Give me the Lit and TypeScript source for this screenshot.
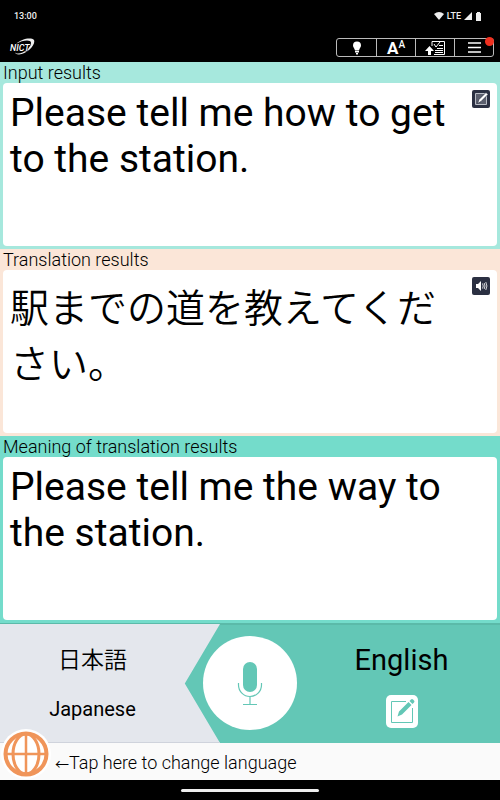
import { LitElement, html, css, svg } from "lit";
import { customElement, property } from "lit/decorators.js";

const penSquare = svg`
  <path d="M20 6.500H5.500v21H26.500V13" fill="none" stroke="currentColor" stroke-width="1"/>
  <path d="M11.500 21.500l1.500-5L22.500 7l3 3L16 19.500z M23.500 6l1.500-1.500q1-1 2 0l1 1q1 1 0 2L26.500 9z" fill="currentColor"/>`;

@customElement("result-panel")
class ResultPanel extends LitElement {
  @property() heading = "";
  @property() text = "";
  @property() action = "";
  @property() lang = "en";

  static styles = css`
    :host {
      display: flex;
      flex-direction: column;
      padding: 1px 3px 3px;
    }
    h2 {
      margin: 0;
      font-size: 18px;
      line-height: 20px;
      font-weight: 350;
    }
    .card {
      flex: 1;
      display: flex;
      align-items: flex-start;
      background: #fff;
      border-radius: 4px;
      padding: 7px 7px 6px;
    }
    p {
      flex: 1;
      margin: 0;
      font-size: 39px;
      line-height: 46px;
    }
    p.ja {
      line-height: 56px;
      padding-top: 4px;
      font-weight: 350;
    }
    button {
      flex: none;
      width: 18px;
      height: 18px;
      padding: 0;
      border: 0;
      border-radius: 2px;
      background: #2b3042;
      color: #fff;
    }
    svg {
      display: block;
      width: 18px;
      height: 18px;
    }
  `;

  render() {
    return html`
      <h2>${this.heading}</h2>
      <div class="card">
        <p class=${this.lang} lang=${this.lang}>${this.text}</p>
        ${this.action === "edit"
          ? html`<button aria-label="Edit input">
              <svg viewBox="0 0 18 18">
                <path d="M3.500 3.500h11v11h-11z" fill="#5b5f6e" stroke="#b9bcc5" />
                <path d="M5.500 13.500l1.500-4L14 2.500l2 2-7 7z" fill="#fff" stroke="#1b2032" stroke-width=".6" />
              </svg>
            </button>`
          : this.action === "speak"
            ? html`<button aria-label="Play translation">
                <svg viewBox="0 0 18 18">
                  <path d="M4 7h2l3-3v10l-3-3H4z" fill="#fff" />
                  <path d="M10.500 6.500q1.500 2.500 0 5M12.200 6q1.600 3 0 6M13.800 5q2.200 4 0 8" fill="none" stroke="#fff" stroke-width=".8" />
                </svg>
              </button>`
            : ""}
      </div>
    `;
  }
}

@customElement("app-root")
class AppRoot extends LitElement {
  static styles = css`
    :host {
      display: flex;
      flex-direction: column;
      min-height: 100vh;
      background: #000;
      color: #000;
      font-family: Roboto, "Noto Sans CJK JP", sans-serif;
    }
    button {
      font: inherit;
      color: inherit;
      border: 0;
      padding: 0;
      background: none;
    }
    svg {
      display: block;
    }
    .status {
      display: flex;
      align-items: center;
      justify-content: space-between;
      height: 32px;
      padding: 0 17px 0 14px;
      color: #eee;
      font-size: 9px;
      font-weight: 500;
    }
    .signals {
      display: flex;
      align-items: center;
      gap: 3px;
    }
    .bar {
      display: flex;
      align-items: center;
      justify-content: space-between;
      height: 30px;
      padding: 0 6px 0 9px;
    }
    .tools {
      position: relative;
      display: grid;
      grid-template-columns: repeat(4, 1fr);
      width: 158px;
      height: 19px;
      box-sizing: border-box;
      border: 1px solid #bbb;
      border-radius: 3px;
      color: #fff;
    }
    .tools button {
      display: flex;
      align-items: center;
      justify-content: center;
    }
    .tools button + button {
      border-left: 1px solid #bbb;
    }
    .tools .size {
      align-items: flex-start;
      font-size: 17px;
      line-height: 18px;
      font-weight: 700;
    }
    .size small {
      font-size: 10px;
      line-height: 11px;
      font-weight: 500;
    }
    .badge {
      position: absolute;
      top: -2px;
      right: -1px;
      width: 9px;
      height: 9px;
      border-radius: 50%;
      background: #f0301f;
    }
    .results {
      flex: 1;
      display: grid;
      grid-auto-rows: 1fr;
    }
    .input {
      background: #a6e8dd;
    }
    .translation {
      background: #fbe6d8;
    }
    .meaning {
      background: #74dccb;
    }
    .languages {
      display: grid;
      grid-template-columns: 37% 26% 37%;
      min-height: 118px;
      border-top: 2px solid #5bbaa9;
      background: #63c7b6;
      position: relative;
    }
    .backdrop {
      position: absolute;
      inset: -1px 56% 0 0;
      background: #e4e7ed;
      border-bottom: 1px solid #cfd3dc;
      clip-path: polygon(0 0, 100% 0, 84% 50%, 100% 100%, 0 100%);
    }
    .source,
    .talk,
    .target {
      position: relative;
      display: flex;
      align-items: center;
    }
    .source {
      flex-direction: column;
      justify-content: flex-start;
      gap: 20px;
      padding-top: 20px;
      text-align: center;
    }
    .native {
      font-size: 23px;
      line-height: 32px;
      font-weight: 350;
    }
    .local {
      font-size: 20px;
      line-height: 24px;
    }
    .talk {
      justify-content: center;
      padding-bottom: 2px;
    }
    .mic {
      width: 94px;
      height: 94px;
      border-radius: 50%;
      background: #fff;
    }
    .target {
      flex-direction: column;
      gap: 18px;
      padding: 18px 12px 0 0;
    }
    .name {
      font-size: 29px;
      line-height: 34px;
    }
    .write {
      width: 32px;
      height: 33px;
      border-radius: 5px;
      background: #fff;
      color: #63c7b6;
    }
    footer {
      display: flex;
      align-items: center;
      box-sizing: border-box;
      height: 37px;
      padding: 2px 0 0 55px;
      background: #fafafa;
      font-size: 18px;
      font-weight: 350;
      position: relative;
    }
    .arrow {
      font-size: 14px;
    }
    .globe {
      position: absolute;
      left: 1px;
      bottom: 1px;
      width: 50px;
      height: 50px;
      border-radius: 50%;
      background: #fff;
    }
    .nav {
      display: flex;
      align-items: center;
      justify-content: center;
      height: 20px;
    }
    .handle {
      width: 138px;
      height: 3px;
      border-radius: 2px;
      background: #eee;
    }
  `;

  render() {
    return html`
      <div class="status">
        <span>13:00</span>
        <div class="signals">
          <svg width="10" height="8" viewBox="0 0 10 8"><path d="M0 2q5-4 10 0L5 8z" fill="#eee" /></svg>
          <span>LTE</span>
          <svg width="8" height="8" viewBox="0 0 8 8"><path d="M0 8L8 0v8z" fill="#eee" /></svg>
          <svg width="8" height="9" viewBox="0 0 8 9"><path d="M1 1h1V0h3v1h1v8H1z" fill="#eee" /></svg>
        </div>
      </div>
      <header class="bar">
        <svg width="26" height="18" viewBox="0 0 26 18" role="img" aria-label="NICT">
          <path d="M7 6C12 1 22-1 25 2c2 5-7 14-15 14.500-3 0-4-1-4-3 0 1.500 1 2 3 2 6 0 13-6 13-11 0-3-8-3-15 1.500z" fill="#eee" />
          <text x="1" y="13" font-size="9" font-weight="500" font-style="italic" fill="#fff" stroke="#000" stroke-width="1" paint-order="stroke">NICT</text>
        </svg>
        <div class="tools">
          <button aria-label="Hints">
            <svg width="10" height="14" viewBox="0 0 10 14">
              <path d="M1 4.500a4 4 0 0 1 8 0c0 2-1.500 2.500-2 5H3C2.500 7 1 6.500 1 4.500zM3 10h4v1.500H3zM4 12h2v1.500H4z" fill="#fff" />
            </svg>
          </button>
          <button class="size" aria-label="Text size">A<small>A</small></button>
          <button aria-label="History">
            <svg width="20" height="16" viewBox="0 0 20 16">
              <path d="M7 6V1.500h12.500v13H9" fill="none" stroke="#fff" />
              <path d="M0 11l4.500-5L9 11H6v4H3v-4z" fill="#fff" />
              <path d="M9 4l2 3 4-5M14 5.500h4M12 8.500h6M10 10.500h8M10 12.500h8" fill="none" stroke="#fff" stroke-width="1" />
            </svg>
          </button>
          <button aria-label="Menu">
            <svg width="16" height="11" viewBox="0 0 16 11"><path d="M2 1h13M2 5.500h13M2 10h13" stroke="#fff" stroke-width="1.500" /></svg>
          </button>
          <span class="badge"></span>
        </div>
      </header>
      <main class="results">
        <result-panel class="input" heading="Input results" text="Please tell me how to get to the station." action="edit"></result-panel>
        <result-panel class="translation" heading="Translation results" text="駅までの道を教えてください。" lang="ja" action="speak"></result-panel>
        <result-panel class="meaning" heading="Meaning of translation results" text="Please tell me the way to the station."></result-panel>
      </main>
      <section class="languages">
        <div class="backdrop"></div>
        <button class="source">
          <span class="native" lang="ja">日本語</span>
          <span class="local">Japanese</span>
        </button>
        <div class="talk">
          <button class="mic" aria-label="Speak">
            <svg width="94" height="94" viewBox="0 0 94 94" fill="none" stroke="#63c7b6">
              <rect x="40" y="26" width="14" height="30" rx="7" fill="#63c7b6" stroke="none" />
              <path d="M35.500 47v2a11.500 11.500 0 0 0 23 0v-2M47 60v8M40 68.500h14" stroke-width="1.200" />
            </svg>
          </button>
        </div>
        <div class="target">
          <span class="name">English</span>
          <button class="write" aria-label="Type text"><svg width="32" height="33" viewBox="0 0 32 33">${penSquare}</svg></button>
        </div>
      </section>
      <footer>
        <button class="globe" aria-label="Change language">
          <svg width="50" height="50" viewBox="0 0 50 50" fill="none" stroke="#f0955a">
            <circle cx="25" cy="25" r="20.500" stroke-width="4" />
            <ellipse cx="25" cy="25" rx="13" ry="20" stroke-width="3" />
            <path d="M25 5v40M5 25h40" stroke-width="2.500" />
          </svg>
        </button>
        <span><span class="arrow">←</span>Tap here to change language</span>
      </footer>
      <div class="nav"><div class="handle"></div></div>
    `;
  }
}
